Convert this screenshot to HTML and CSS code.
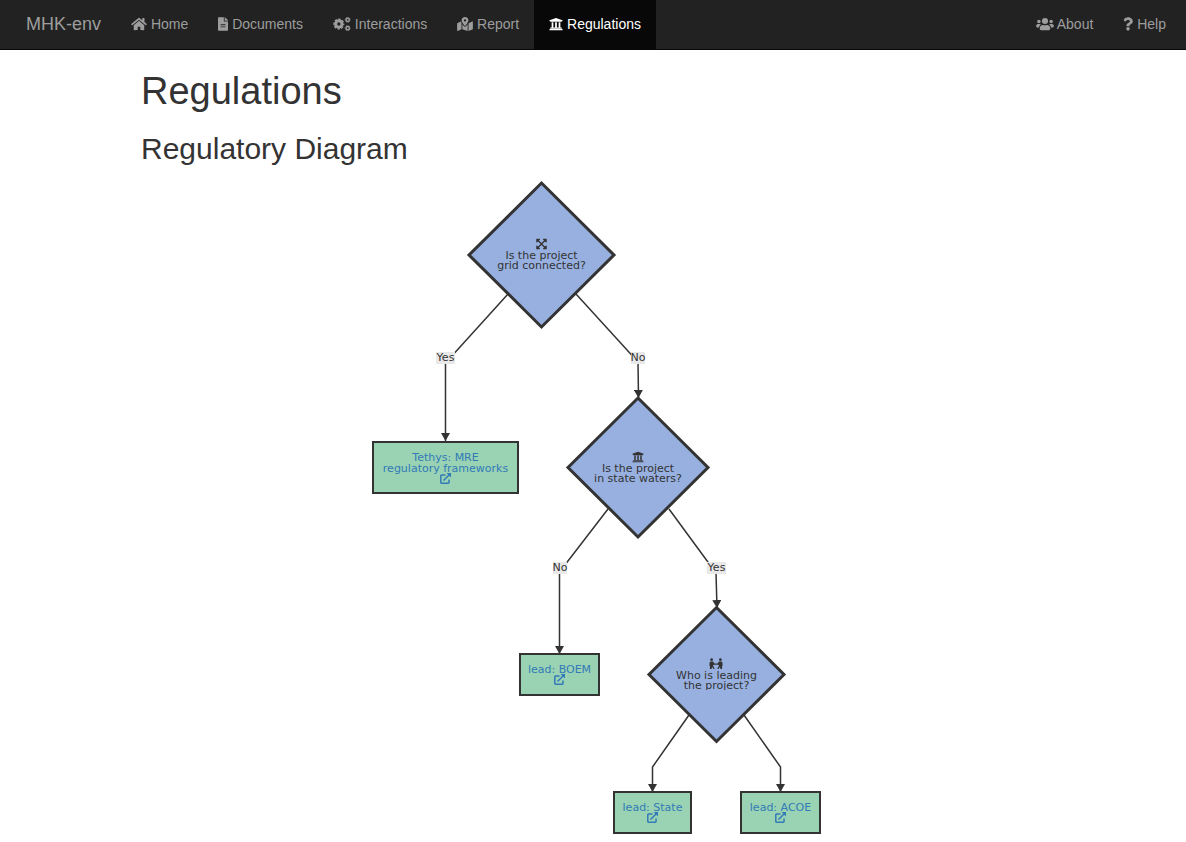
FILE: index.html
```html
<!DOCTYPE html>
<html lang="en">
<head>
<meta charset="utf-8">
<title>MHK-env</title>
<link rel="stylesheet" href="styles.css">
</head>
<body>
<svg class="sprite" aria-hidden="true">
  <symbol id="home" viewBox="0 0 576 512"><path d="M280.37 148.26L96 300.11V464a16 16 0 0 0 16 16l112.06-.29a16 16 0 0 0 15.92-16V368a16 16 0 0 1 16-16h64a16 16 0 0 1 16 16v95.64a16 16 0 0 0 16 16.05L464 480a16 16 0 0 0 16-16V300L295.67 148.26a12.19 12.19 0 0 0-15.3 0zM571.6 251.47L488 182.56V44.05a12 12 0 0 0-12-12h-56a12 12 0 0 0-12 12v72.61L318.47 43a48 48 0 0 0-61 0L4.34 251.47a12 12 0 0 0-1.6 16.9l25.5 31A12 12 0 0 0 45.15 301l235.22-193.74a12.19 12.19 0 0 1 15.3 0L530.9 301a12 12 0 0 0 16.9-1.6l25.5-31a12 12 0 0 0-1.7-16.93z"/></symbol>
  <symbol id="file" viewBox="0 0 384 512"><path d="M224 136V0H24C10.7 0 0 10.7 0 24v464c0 13.3 10.7 24 24 24h336c13.3 0 24-10.7 24-24V160H248c-13.2 0-24-10.8-24-24zm64 236c0 6.6-5.4 12-12 12H108c-6.6 0-12-5.4-12-12v-8c0-6.6 5.4-12 12-12h168c6.6 0 12 5.4 12 12v8zm0-84c0 6.6-5.4 12-12 12H108c-6.6 0-12-5.4-12-12v-8c0-6.6 5.4-12 12-12h168c6.6 0 12 5.4 12 12v8zM384 121.9v6.1H256V0h6.1c6.4 0 12.5 2.5 17 7l97.9 98c4.5 4.5 7 10.6 7 16.9z"/></symbol>
  <symbol id="cogs" viewBox="0 0 640 512">
    <g fill="none" stroke="currentColor">
      <circle cx="204" cy="256" r="116" stroke-width="108"/>
      <circle cx="204" cy="256" r="178" stroke-width="50" stroke-dasharray="88 51.800" stroke-dashoffset="44"/>
      <circle cx="528" cy="104" r="62" stroke-width="54"/>
      <circle cx="528" cy="104" r="92" stroke-width="26" stroke-dasharray="56 40.340" stroke-dashoffset="28"/>
      <circle cx="528" cy="408" r="62" stroke-width="54"/>
      <circle cx="528" cy="408" r="92" stroke-width="26" stroke-dasharray="56 40.340" stroke-dashoffset="28"/>
    </g>
  </symbol>
  <symbol id="map" viewBox="0 0 576 512"><path fill-rule="evenodd" d="M288 0c-69.6 0-126 56.4-126 126 0 56.3 82.4 158.8 113.9 196.02 6.39 7.54 17.82 7.54 24.2 0C331.6 284.8 414 182.3 414 126 414 56.4 357.6 0 288 0zm0 168a42 42 0 1 1 0-84 42 42 0 0 1 0 84z"/><path d="M20.12 215.95A32.006 32.006 0 0 0 0 245.66v250.32c0 11.32 11.43 19.06 21.94 14.86L160 448V214.92c-8.84-15.98-16.07-31.54-21.25-46.42L20.12 215.95zM288 359.67c-14.07 0-27.38-6.18-36.51-16.96-19.66-23.2-40.57-49.62-59.49-76.72v182l192 64V266c-18.92 27.09-39.82 53.52-59.49 76.72-9.13 10.77-22.44 16.95-36.51 16.95zm266.06-198.51L416 224v288l139.88-55.95A31.996 31.996 0 0 0 576 426.34V176.02c0-11.32-11.43-19.06-21.94-14.86z"/></symbol>
  <symbol id="landmark" viewBox="0 0 512 512"><path d="M496 128v16a8 8 0 0 1-8 8h-24v12c0 6.627-5.373 12-12 12H60c-6.627 0-12-5.373-12-12v-12H24a8 8 0 0 1-8-8v-16a8 8 0 0 1 4.941-7.392l232-88a7.996 7.996 0 0 1 6.118 0l232 88A8 8 0 0 1 496 128zm-24 304H40c-13.255 0-24 10.745-24 24v16a8 8 0 0 0 8 8h464a8 8 0 0 0 8-8v-16c0-13.255-10.745-24-24-24zM96 192v192H60c-6.627 0-12 5.373-12 12v20h416v-20c0-6.627-5.373-12-12-12h-36V192h-64v192h-64V192h-64v192h-64V192H96z"/></symbol>
  <symbol id="users" viewBox="0 0 640 512"><circle cx="96" cy="160" r="64"/><circle cx="544" cy="160" r="64"/><circle cx="320" cy="144" r="112"/><path d="M64 256h64c18 0 34 7 45 19-40 22-68 61-74 109H32c-18 0-32-14-32-32v-32c0-35 29-64 64-64zM576 256h-64c-18 0-34 7-45 19 40 22 68 61 74 109h67c18 0 32-14 32-32v-32c0-35-29-64-64-64zM243 288h8c44 21 94 21 138 0h8c64 0 115 52 115 115v29c0 27-22 48-48 48H176c-27 0-48-21-48-48v-29c0-63 52-115 115-115z"/></symbol>
  <symbol id="question" viewBox="0 0 384 512"><path d="M202.021 0C122.202 0 70.503 32.703 29.914 91.026c-7.363 10.58-5.093 25.086 5.178 32.874l43.138 32.709c10.373 7.865 25.132 6.026 33.253-4.148 25.049-31.381 43.63-49.449 82.757-49.449 30.764 0 68.816 19.799 68.816 49.631 0 22.552-18.617 34.134-48.993 51.164-35.423 19.86-82.299 44.576-82.299 106.405V320c0 13.255 10.745 24 24 24h72.471c13.255 0 24-10.745 24-24v-5.773c0-42.86 125.268-44.645 125.268-160.627C377.504 66.256 286.902 0 202.021 0z"/><circle cx="192" cy="442" r="69"/></symbol>
  <symbol id="expand" viewBox="0 0 448 512"><path d="M448 344v112a23.94 23.94 0 0 1-24 24H312c-21.39 0-32.09-25.9-17-41l36.2-36.2L224 295.6 116.77 402.9 153 439c15.09 15.1 4.39 41-17 41H24a23.94 23.94 0 0 1-24-24V344c0-21.4 25.89-32.1 41-17l36.19 36.2L184.46 256 77.18 148.7 41 185c-15.1 15.1-41 4.4-41-17V56a23.94 23.94 0 0 1 24-24h112c21.39 0 32.09 25.9 17 41l-36.2 36.2L224 216.4l107.23-107.3L295 73c-15.09-15.1-4.39-41 17-41h112a23.94 23.94 0 0 1 24 24v112c0 21.4-25.89 32.1-41 17l-36.19-36.2L263.54 256l107.28 107.3L407 327.1c15.1-15.2 41-4.5 41 16.9z"/></symbol>
  <symbol id="carry" viewBox="0 0 14 12"><circle cx="2.600" cy="1.700" r="1.400"/><circle cx="11.400" cy="1.700" r="1.400"/><path d="M1.500 3.600H4l1.500 2h3l1.500-2h2.500l1 1.200V8l-.6.600.3 2.400h-1.700l-.6-2-1.500 2H8.200l1.600-3v-1l-.8-.2H5L4.200 7v1l1.600 3H4.600L3.100 9l-.6 2H.8l.3-2.400L.5 8V4.800z"/></symbol>
  <symbol id="external" viewBox="0 0 11 11"><path d="M5.500 2H1.500Q.8 2 .8 2.700V9.500Q.8 10.200 1.500 10.200H8.300Q9 10.200 9 9.500V6.500M3.500 7.500L9.500 1.500" fill="none" stroke="currentColor" stroke-width="1.500"/><path d="M6.500 0H11v4.500z"/></symbol>
</svg>

<header class="navbar">
  <a class="brand" href="#">MHK-env</a>
  <nav class="menu">
    <a class="item" href="#"><svg class="icon wide"><use href="#home"/></svg> Home</a>
    <a class="item" href="#"><svg class="icon narrow"><use href="#file"/></svg> Documents</a>
    <a class="item" href="#"><svg class="icon wider"><use href="#cogs"/></svg> Interactions</a>
    <a class="item" href="#"><svg class="icon wide"><use href="#map"/></svg> Report</a>
    <a class="item active" href="#" aria-current="page"><svg class="icon"><use href="#landmark"/></svg> Regulations</a>
  </nav>
  <nav class="menu end">
    <a class="item" href="#"><svg class="icon wider"><use href="#users"/></svg> About</a>
    <a class="item" href="#"><svg class="icon narrow"><use href="#question"/></svg> Help</a>
  </nav>
</header>

<main class="content">
  <h1 class="title">Regulations</h1>
  <h2 class="subtitle">Regulatory Diagram</h2>
  <svg class="diagram" width="464" height="660" viewBox="361 178 464 660" role="group" aria-label="Regulatory decision diagram">
    <defs>
      <marker id="arrow" viewBox="0 0 8 9" refX="8" refY="4.500" markerWidth="8" markerHeight="9" markerUnits="userSpaceOnUse" orient="auto"><path d="M0 0L8 4.500L0 9z" fill="#333"/></marker>
      <clipPath id="label-box"><path d="M660 655h112v35H660z"/></clipPath>
    </defs>
    <g class="edges">
      <path d="M508 294L445.500 363V441"/>
      <path d="M576 294L638 362L638.500 398"/>
      <path d="M608 509L559.500 572V654"/>
      <path d="M669 509L716 573L717 608"/>
      <path d="M689 715L652.500 767V792"/>
      <path d="M744 715L780.500 767V792"/>
    </g>
    <g class="tag">
      <rect x="436" y="352" width="19" height="12"/><text x="445.500" y="361">Yes</text>
      <rect x="631" y="352" width="14" height="12"/><text x="638" y="361">No</text>
      <rect x="553" y="562" width="14" height="12"/><text x="560" y="571">No</text>
      <rect x="707" y="562" width="19" height="12"/><text x="716.500" y="571">Yes</text>
    </g>
    <g class="decision">
      <path d="M541.500 183L614 255L541.500 327L469 255z"/>
      <use href="#expand" x="536" y="238" width="11" height="12"/>
      <text y="259"><tspan x="541.500">Is the project</tspan><tspan x="541.500" dy="10">grid connected?</tspan></text>
    </g>
    <g class="decision">
      <path d="M638 398L708 467.500L638 537L568 467.500z"/>
      <use href="#landmark" x="632" y="451" width="12" height="12"/>
      <text y="472"><tspan x="638">Is the project</tspan><tspan x="638" dy="10">in state waters?</tspan></text>
    </g>
    <g class="decision">
      <path d="M716.500 607.500L784 674.500L716.500 741.500L649 674.500z"/>
      <use href="#carry" x="709" y="658" width="14" height="12"/>
      <text y="679" clip-path="url(#label-box)"><tspan x="716.500">Who is leading</tspan><tspan x="716.500" dy="10">the project?</tspan></text>
    </g>
    <a class="outcome" href="#">
      <rect x="373" y="442" width="145" height="51"/>
      <text y="461"><tspan x="445.500">Tethys: MRE</tspan><tspan x="445.500" dy="11">regulatory frameworks</tspan></text>
      <use href="#external" x="440" y="473" width="11" height="11"/>
    </a>
    <a class="outcome" href="#">
      <rect x="520" y="654" width="79" height="41"/>
      <text x="559.500" y="673">lead: BOEM</text>
      <use href="#external" x="554" y="674" width="11" height="11"/>
    </a>
    <a class="outcome" href="#">
      <rect x="614" y="792" width="77" height="41"/>
      <text x="652.500" y="811">lead: State</text>
      <use href="#external" x="647" y="812" width="11" height="11"/>
    </a>
    <a class="outcome" href="#">
      <rect x="741" y="792" width="79" height="41"/>
      <text x="780.500" y="811">lead: ACOE</text>
      <use href="#external" x="775" y="812" width="11" height="11"/>
    </a>
  </svg>
</main>
</body>
</html>
```

FILE: styles.css
```css
* { box-sizing: border-box; }

body {
  margin: 0;
  background: #fff;
  color: #333;
  font: 14px/20px "Liberation Sans", Arial, sans-serif;
}

.sprite { position: absolute; width: 0; height: 0; }

.navbar {
  display: flex;
  flex-wrap: wrap;
  padding: 0 5px 0 11px;
  background: #222;
  border-bottom: 1px solid #080808;
}

.brand, .item {
  padding: 14px 15px 15px;
  color: #9d9d9d;
  text-decoration: none;
}

.brand { font-size: 18px; }
.menu { display: flex; flex-wrap: wrap; }
.end { margin-left: auto; }
.active { background: #080808; color: #fff; }

.icon {
  width: 14px;
  height: 14px;
  vertical-align: -2px;
  fill: currentColor;
}
.narrow { width: 10px; }
.wide { width: 16px; }
.wider { width: 18px; }

.content {
  max-width: 904px;
  margin: 0 auto;
  padding: 20px 0 4px;
}

.title, .subtitle { margin: 0; font-weight: 500; }
.title { font-size: 38px; line-height: 42px; }
.subtitle { margin: 20px 0 12px; font-size: 30px; line-height: 34px; }

.diagram {
  display: block;
  max-width: 100%;
  margin: 0 auto;
  font: 11px "DejaVu Sans", sans-serif;
  text-anchor: middle;
  fill: #333;
}

.edges path { fill: none; stroke: #333; stroke-width: 1.5px; marker-end: url(#arrow); }
.tag rect { fill: #e8e8e8; }
.decision { color: #333; }
.decision > path { fill: #97b0e0; stroke: #333; stroke-width: 3px; }
.outcome { color: #337ab7; fill: #337ab7; }
.outcome rect { fill: #99d3b3; stroke: #333; stroke-width: 2px; }
```
